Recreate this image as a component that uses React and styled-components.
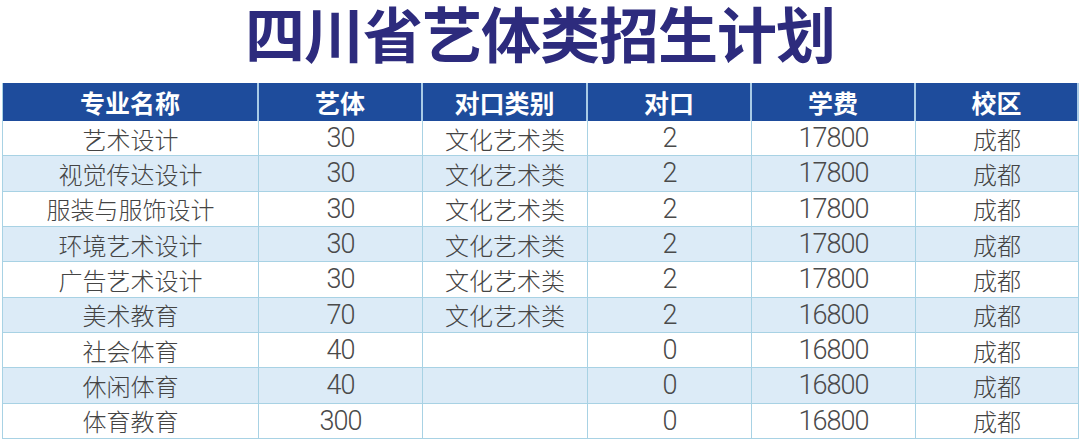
import React from "react";
import styled, { createGlobalStyle } from "styled-components";

const Global = createGlobalStyle`
  html, body { margin: 0; padding: 0; background: #ffffff; }
  body { font-family: "Noto Sans CJK SC", "Noto Sans", sans-serif; }
`;

const Page = styled.div`
  width: 1080px;
  height: 441px;
  overflow: hidden;
  background: #ffffff;
  display: flex;
  flex-direction: column;
`;

const Title = styled.h1`
  margin: 0;
  height: 83px;
  padding-bottom: 19px;
  box-sizing: border-box;
  display: flex;
  align-items: center;
  justify-content: center;
  font-family: "Noto Sans CJK SC", sans-serif;
  font-weight: 700;
  font-size: 60px;
  letter-spacing: -1px;
  color: #2d2b7d;
  line-height: 64px;
`;

const Table = styled.div`
  margin-left: 2px;
  width: 1076px;
  display: grid;
  grid-template-columns: 256px 164px 165px 164px 164px 163px;
  grid-template-rows: 38px repeat(9, 35.33px);
  border-left: 1px solid #a8d2e4;
  box-sizing: border-box;
`;

const HeadCell = styled.div`
  background: #1e4c9c;
  color: #ffffff;
  font-weight: 700;
  font-size: 25px;
  display: flex;
  align-items: center;
  justify-content: center;
  border-right: 2px solid #a9cbe6;
  box-sizing: border-box;
  line-height: 1;
  &:last-child { border-right: none; }
`;

const Cell = styled.div`
  background: ${(p) => (p.$alt ? "#dcebf7" : "#ffffff")};
  color: #444444;
  font-weight: 300;
  font-size: 24px;
  display: flex;
  align-items: center;
  justify-content: center;
  border-right: 1px solid #a8d2e4;
  border-bottom: 1px solid #a8d2e4;
  box-sizing: border-box;
  line-height: 1;
  padding-top: 1px;
`;

const NumCell = styled(Cell)`
  font-family: Roboto, "Noto Sans", sans-serif;
  font-weight: 300;
  font-size: 27px;
  letter-spacing: -1px;
  color: #4a4a4a;
`;

const headers = ["专业名称", "艺体", "对口类别", "对口", "学费", "校区"];

const rows = [
  ["艺术设计", "30", "文化艺术类", "2", "17800", "成都"],
  ["视觉传达设计", "30", "文化艺术类", "2", "17800", "成都"],
  ["服装与服饰设计", "30", "文化艺术类", "2", "17800", "成都"],
  ["环境艺术设计", "30", "文化艺术类", "2", "17800", "成都"],
  ["广告艺术设计", "30", "文化艺术类", "2", "17800", "成都"],
  ["美术教育", "70", "文化艺术类", "2", "16800", "成都"],
  ["社会体育", "40", "", "0", "16800", "成都"],
  ["休闲体育", "40", "", "0", "16800", "成都"],
  ["体育教育", "300", "", "0", "16800", "成都"],
];

const numericCols = new Set([1, 3, 4]);

export default function App() {
  return (
    <>
      <Global />
      <Page>
        <Title>四川省艺体类招生计划</Title>
        <Table>
          {headers.map((h) => (
            <HeadCell key={h}>{h}</HeadCell>
          ))}
          {rows.map((r, i) =>
            r.map((v, j) =>
              numericCols.has(j) ? (
                <NumCell key={`${i}-${j}`} $alt={i % 2 === 1}>{v}</NumCell>
              ) : (
                <Cell key={`${i}-${j}`} $alt={i % 2 === 1}>{v}</Cell>
              )
            )
          )}
        </Table>
      </Page>
    </>
  );
}
